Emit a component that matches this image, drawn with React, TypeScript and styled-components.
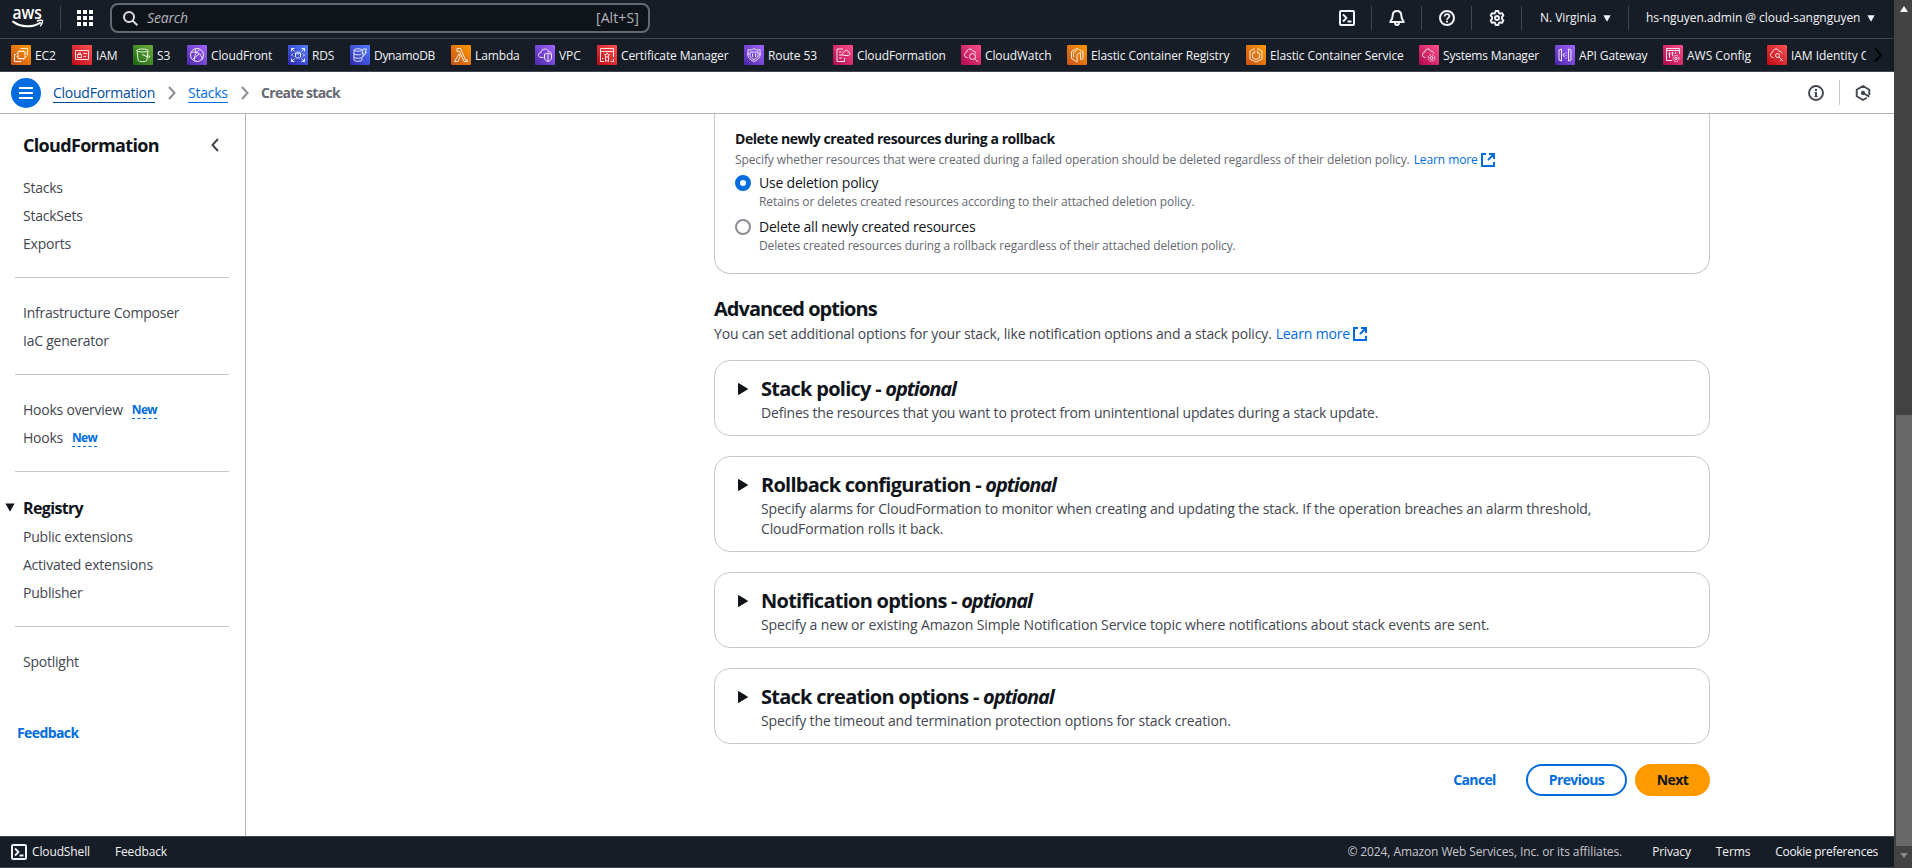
import React from "react";
import styled, { createGlobalStyle, css } from "styled-components";

const GlobalStyle = createGlobalStyle`
  *, *::before, *::after { box-sizing: border-box; }
  body {
    margin: 0;
    background: #fff;
    font-family: "Open Sans", "Noto Sans", sans-serif;
    font-size: 14px;
    line-height: 20px;
    letter-spacing: -0.17px;
    color: #0f141a;
  }
`;

const Viewport = styled.div`
  display: grid;
  grid-template-columns: 1894px 18px;
  height: 868px;
  overflow: hidden;
`;

const Page = styled.div`
  display: flex;
  flex-direction: column;
  height: 868px;
  min-width: 0;
`;

/* ---------- scrollbar ---------- */

const ScrollTrack = styled.div`
  display: flex;
  flex-direction: column;
  align-items: center;
  padding: 6px 0 0 2px;
  background: #424242;
`;

const ScrollThumb = styled.div`
  width: 16px;
  height: 431px;
  margin-top: 403px;
  background: #686868;
`;

const ScrollArrow = styled.div<{ $up?: boolean }>`
  width: 0;
  height: 0;
  border: 4px solid transparent;
  ${(p) =>
    p.$up
      ? css`
          border-width: 0 4px 6px;
          border-bottom-color: #fff;
        `
      : css`
          margin-top: 7px;
          border-width: 5px 4px 0;
          border-top-color: #8b8b8b;
        `}
`;

/* ---------- top navigation ---------- */

const TopBar = styled.header`
  display: flex;
  align-items: center;
  flex: none;
  height: 39px;
  padding: 0 19px 2px 12px;
  background: #161d26;
  border-bottom: 1px solid #424650;
  color: #f3f3f7;
`;

const TopDivider = styled.span<{ $before: number; $after: number }>`
  flex: none;
  width: 1px;
  height: 24px;
  margin: 0 ${(p) => p.$after}px 0 ${(p) => p.$before}px;
  background: #424650;
`;

const SearchBox = styled.div`
  display: flex;
  align-items: center;
  width: 540px;
  height: 30px;
  margin-left: 17px;
  padding: 0 9px 0 11px;
  border: 2px solid #656871;
  border-radius: 8px;
  background: #0f141a;
  color: #b4b4bb;
`;

const SearchHint = styled.span`
  flex: 1;
  margin-left: 9px;
  font-style: italic;
`;

const Shortcut = styled.span`
  letter-spacing: 0.12px;
`;

const TopActions = styled.div`
  display: flex;
  align-items: center;
  margin-left: auto;
`;

const TopMenu = styled.span<{ $width: number; $ls: number }>`
  display: flex;
  align-items: center;
  justify-content: space-between;
  width: ${(p) => p.$width}px;
  font-size: 12px;
  letter-spacing: ${(p) => p.$ls}px;
  white-space: nowrap;
`;

const FavoritesBar = styled.nav`
  display: flex;
  align-items: center;
  flex: none;
  height: 33px;
  padding: 0 8px 0 11px;
  background: #161d26;
  border-bottom: 1px solid #424650;
`;

const FavoritesList = styled.div`
  display: flex;
  align-items: center;
  width: 1855px;
  overflow: hidden;
`;

const Favorite = styled.a<{ $pitch: number; $ls?: number }>`
  display: flex;
  align-items: center;
  flex: none;
  gap: 4px;
  width: ${(p) => p.$pitch}px;
  color: #f3f3f7;
  font-size: 12px;
  letter-spacing: ${(p) => p.$ls ?? -0.12}px;
  white-space: nowrap;
`;

const FavoriteName = styled.span`
  padding-top: 1px;
`;

const tileColors = {
  orange: ["#c8511b", "#ff9900"],
  red: ["#bd0816", "#ff5252"],
  green: ["#1b660f", "#6cae3e"],
  purple: ["#4d27aa", "#a166ff"],
  blue: ["#2e27ad", "#527fff"],
  pink: ["#b0084d", "#ff4f8b"],
};

const Tile = styled.span<{ $tone: keyof typeof tileColors }>`
  display: flex;
  flex: none;
  width: 20px;
  height: 20px;
  border-radius: 1px;
  background: linear-gradient(
    45deg,
    ${(p) => tileColors[p.$tone][0]},
    ${(p) => tileColors[p.$tone][1]}
  );
`;

const MoreArrow = styled.span`
  display: flex;
  margin-left: 6px;
`;

/* ---------- breadcrumb bar ---------- */

const CrumbBar = styled.div`
  display: flex;
  align-items: center;
  flex: none;
  height: 42px;
  padding: 0 23px 0 11px;
  border-bottom: 1px solid #b4b4bb;
`;

const MenuButton = styled.button`
  display: flex;
  align-items: center;
  justify-content: center;
  width: 30px;
  height: 30px;
  margin-right: 12px;
  padding: 0;
  border: 0;
  border-radius: 50%;
  background: #006ce0;
`;

const Crumb = styled.a<{ $visited?: boolean; $width: number }>`
  width: ${(p) => p.$width}px;
  height: 20px;
  line-height: 20px;
  border-bottom: 1px solid currentColor;
  color: ${(p) => (p.$visited ? "#004a9e" : "#006ce0")};
  letter-spacing: -0.25px;
  white-space: nowrap;
`;

const CurrentCrumb = styled.span`
  padding-top: 1px;
  color: #656871;
  font-weight: 700;
  letter-spacing: -0.7px;
`;

const CrumbChevron = styled.svg`
  width: 8px;
  height: 14px;
  margin: 0 12px 0 13px;
`;

const ToolGroup = styled.div`
  display: flex;
  align-items: center;
  margin-left: auto;
`;

const ToolDivider = styled.span`
  width: 1px;
  height: 25px;
  margin: 0 15px;
  background: #c6c6cd;
`;

/* ---------- side navigation ---------- */

const Body = styled.div`
  display: flex;
  flex: 1;
  min-height: 0;
`;

const SideNav = styled.aside`
  flex: none;
  width: 246px;
  padding: 18px 16px 0 15px;
  border-right: 1px solid #b4b4bb;
  color: #424650;
`;

const SideHeader = styled.div`
  display: flex;
  align-items: center;
  justify-content: space-between;
  height: 26px;
  margin-bottom: 15px;
  padding: 0 10px 0 8px;
`;

const SideTitle = styled.h2`
  margin: 0;
  color: #0f141a;
  font-size: 18px;
  font-weight: 700;
  letter-spacing: -0.68px;
`;

const SideLink = styled.a`
  display: flex;
  align-items: center;
  height: 28px;
  padding: 1px 0 0 8px;
  letter-spacing: -0.23px;
`;

const SideRule = styled.hr`
  height: 1px;
  margin: 20px 0;
  border: 0;
  background: #c6c6cd;
`;

const SideSection = styled.div`
  display: flex;
  align-items: center;
  gap: 8px;
  height: 30px;
  margin-left: -10px;
  padding-top: 1px;
  color: #0f141a;
  font-size: 16px;
  font-weight: 700;
  letter-spacing: -0.64px;
`;

const NewBadge = styled.span`
  height: 17px;
  margin: 1px 0 0 9px;
  border-bottom: 1px dashed #006ce0;
  color: #006ce0;
  font-size: 12px;
  font-weight: 700;
  line-height: 16px;
  letter-spacing: -0.7px;
`;

const SideFeedback = styled.a`
  display: block;
  margin: 48px 0 0 2px;
  color: #006ce0;
  font-weight: 700;
  letter-spacing: -0.6px;
`;

/* ---------- content ---------- */

const Main = styled.main`
  flex: 1;
  min-width: 0;
  padding: 0 184px 0 468px;
`;

const OpenPanel = styled.section`
  height: 160px;
  padding: 15px 20px 0;
  border: 1px solid #c6c6cd;
  border-top: 0;
  border-radius: 0 0 16px 16px;
`;

const FieldLabel = styled.div`
  font-weight: 700;
  letter-spacing: -0.46px;
`;

const FieldHint = styled.div`
  display: flex;
  align-items: center;
  height: 22px;
  margin-bottom: 2px;
  color: #656871;
  font-size: 12px;
  letter-spacing: -0.1px;
`;

const Link = styled.a`
  display: inline-flex;
  align-items: center;
  gap: 3px;
  margin-left: 4px;
  color: #006ce0;
`;

const Option = styled.label`
  display: grid;
  grid-template-columns: 16px 1fr;
  column-gap: 8px;
  margin-bottom: 8px;
  align-items: center;
  letter-spacing: -0.2px;
`;

const Radio = styled.span<{ $checked?: boolean }>`
  width: 16px;
  height: 16px;
  border: ${(p) => (p.$checked ? "5px solid #006ce0" : "2px solid #8c8c94")};
  border-radius: 50%;
`;

const OptionHint = styled.span`
  grid-column: 2;
  height: 16px;
  color: #656871;
  font-size: 12px;
  line-height: 18px;
  letter-spacing: -0.12px;
`;

const SectionTitle = styled.h2`
  margin: 23px 0 3px;
  font-size: 20px;
  font-weight: 700;
  line-height: 24px;
  letter-spacing: -0.98px;
`;

const SectionText = styled.div`
  display: flex;
  align-items: center;
  margin-bottom: 16px;
  color: #424650;
  letter-spacing: -0.15px;
`;

const Card = styled.section`
  display: grid;
  grid-template-columns: 12px 1fr;
  column-gap: 12px;
  margin-bottom: 20px;
  padding: 16px 20px 12px 22px;
  border: 1px solid #c6c6cd;
  border-radius: 16px;
`;

const CardTitle = styled.h3`
  margin: 0 0 2px;
  font-size: 20px;
  font-weight: 700;
  line-height: 24px;
  letter-spacing: -0.74px;
`;

const Optional = styled.i`
  letter-spacing: -1.1px;
`;

const CardText = styled.p<{ $ls?: number }>`
  grid-column: 2;
  width: 850px;
  margin: 0;
  color: #424650;
  letter-spacing: ${(p) => p.$ls ?? -0.19}px;
`;

const CardArrow = styled.svg`
  width: 12px;
  height: 14px;
  margin-top: 5px;
`;

const Actions = styled.div`
  display: flex;
  justify-content: flex-end;
  align-items: center;
  gap: 8px;
`;

const Button = styled.button<{ $kind: "link" | "normal" | "primary"; $width: number }>`
  width: ${(p) => p.$width}px;
  height: 32px;
  padding: 0;
  border: 2px solid transparent;
  border-radius: 16px;
  background: transparent;
  color: #006ce0;
  font: 700 14px/20px "Open Sans", "Noto Sans", sans-serif;
  letter-spacing: -0.64px;
  ${(p) => p.$kind === "normal" && css`border-color: #006ce0;`}
  ${(p) =>
    p.$kind === "primary" &&
    css`
      background: #ff9900;
      border-color: #ff9900;
      color: #0f141a;
    `}
`;

/* ---------- footer ---------- */

const Footer = styled.footer`
  display: flex;
  align-items: center;
  flex: none;
  height: 32px;
  padding: 0 16px 0 11px;
  border-top: 1px solid #424650;
  border-bottom: 1px solid #424650;
  background: #161d26;
  color: #f3f3f7;
  font-size: 12px;
`;

const FooterLink = styled.a<{ $gap: number; $ls?: number }>`
  margin-left: ${(p) => p.$gap}px;
  letter-spacing: ${(p) => p.$ls ?? -0.13}px;
`;

const Copyright = styled.span`
  margin-left: auto;
  color: #c6c6cd;
  letter-spacing: -0.1px;
`;

/* ---------- icons ---------- */

const LogoSvg = styled.svg`
  overflow: visible;
`;

const AwsLogo = () => (
  <LogoSvg width="32" height="24" viewBox="0 0 32 24" fill="none">
    <text x="0.5" y="12.6" fill="#fff" fontSize="18" fontWeight="600" fontFamily="Open Sans, sans-serif" textLength="29.5" lengthAdjust="spacingAndGlyphs" letterSpacing="0">aws</text>
    <path d="M1 15.600c8 6 19.500 6 27 1.200" stroke="#fff" strokeWidth="2" strokeLinecap="round" />
    <path d="M25.300 15c2-.9 4.700-1 5.100-.5.4.6-.2 3.600-1.900 5.200" stroke="#fff" strokeWidth="1.400" strokeLinecap="round" />
  </LogoSvg>
);

const AppsIcon = () => (
  <svg width="16" height="16" viewBox="0 0 16 16" fill="#fff">
    {[0, 6, 12].map((y) => [0, 6, 12].map((x) => <rect key={`${x}-${y}`} x={x} y={y} width="4" height="4" />))}
  </svg>
);

const SearchIcon = () => (
  <svg width="15" height="15" viewBox="0 0 15 15" fill="none" stroke="#dedee3" strokeWidth="2">
    <circle cx="6" cy="6" r="5" />
    <path d="M9.600 9.600 14.300 14.300" />
  </svg>
);

const ShellIcon = ({ color = "#f3f3f7" }: { color?: string }) => (
  <svg width="16" height="16" viewBox="0 0 16 16" fill="none" stroke={color} strokeWidth="2" strokeLinejoin="round">
    <rect x="1" y="1" width="14" height="14" rx="1" />
    <path d="M4 4.500 7.500 8 4 11.500M8.500 11.500h4" strokeWidth="1.800" />
  </svg>
);

const BellIcon = () => (
  <svg width="16" height="16" viewBox="0 0 16 16" fill="none" stroke="#f3f3f7" strokeWidth="2" strokeLinejoin="round">
    <path d="M8 1C5.200 1 3.700 3 3.700 5.500c0 3-1 4.500-2.500 6.500h13.600c-1.500-2-2.500-3.500-2.500-6.500C12.300 3 10.800 1 8 1Z" />
    <path d="M6 12.500c0 1.600.8 2.500 2 2.500s2-.9 2-2.500" />
  </svg>
);

const HelpIcon = () => (
  <svg width="16" height="16" viewBox="0 0 16 16" fill="none" stroke="#f3f3f7" strokeWidth="2">
    <circle cx="8" cy="8" r="7" />
    <path d="M5.600 6.500C5.600 5 6.600 4.200 8 4.200s2.400.8 2.400 2.100C10.400 7.800 8 7.900 8 9.800" strokeWidth="1.700" />
    <path d="M8 10.700v1.900" />
  </svg>
);

const GearIcon = () => (
  <svg width="16" height="16" viewBox="0 0 16 16" fill="none" stroke="#f3f3f7" strokeWidth="1.900" strokeLinejoin="round">
    <path d="M6.600 1h2.800l.4 1.900 1.300.8 1.900-.6 1.400 2.400L13 6.900v2.200l1.400 1.400-1.400 2.400-1.900-.6-1.300.8-.4 1.900H6.600l-.4-1.900-1.300-.8-1.900.6-1.400-2.400L3 9.100V6.900L1.600 5.500 3 3.100l1.900.6 1.300-.8Z" />
    <circle cx="8" cy="8" r="2" />
  </svg>
);

const CaretDown = ({ color = "#f3f3f7", width = 8 }: { color?: string; width?: number }) => (
  <svg width={width} height={width - 1} viewBox="0 0 8 7" fill={color}>
    <path d="M.3.300h7.400L4 6.800Z" />
  </svg>
);

const ExternalIcon = () => (
  <svg width="14" height="14" viewBox="0 0 14 14" fill="none" stroke="#006ce0" strokeWidth="2">
    <path d="M5 1H1v12h12V9M8 1h5v5M13 1 7 7" />
  </svg>
);

const InfoIcon = () => (
  <svg width="16" height="16" viewBox="0 0 16 16" fill="none" stroke="#424650" strokeWidth="1.900">
    <circle cx="8" cy="8" r="7" />
    <path d="M8 4v1.900M8 7v5" strokeWidth="2" />
    <path d="M6.500 7.500H8M6.300 11.600h3.400" strokeWidth="1" />
  </svg>
);

const HexIcon = () => (
  <svg width="16" height="16" viewBox="0 0 16 16" fill="none" stroke="#424650" strokeWidth="1.900" strokeLinejoin="round">
    <path d="M14.300 10V4.700L8 1 1.700 4.700v6.600L8 15l3.800-2.200" />
    <circle cx="8" cy="8" r="1.200" fill="#424650" />
    <path d="m8 8 6.300 3.600" />
  </svg>
);

const Separator = () => (
  <CrumbChevron viewBox="0 0 8 14" fill="none" stroke="#8c8c94" strokeWidth="2">
    <path d="m1 1 5.500 6L1 13" />
  </CrumbChevron>
);

const cloud = "M6.500 12.500C4.500 12.500 3.500 11.300 3.500 9.800c0-1.400.9-2.300 2.200-2.600C5.800 5.300 7.200 4 9 4c1.600 0 2.700.9 3.200 2.400 1.600-.3 2.600.7 2.600 2.100";

const glyphs: Record<string, React.ReactNode> = {
  ec2: <path d="M7 6.500h7v7H7zM9 6.500V5M12 6.500V5M9 15v-1.500M12 15v-1.500M14 8.500h1.500M14 11.500h1.500M5.500 8.500H7M5.500 11.500H7M9.500 3.500h7v7M10.500 16.500h-7v-7H5" />,
  iam: <path d="M3.500 5.500h13v9h-13zM5.500 9.500h4v3h-4zM6.500 9.500V8h2v1.500M11.500 8.500H15M11.500 11.500H14" />,
  s3: <path d="M4 5.500c0 2 11 2 11 0s-11-2-11 0l1.200 10c0 1.500 8.600 1.500 8.600 0L15 5.500M9 9.500l6 2.500c2.500 1 2-1-.5-2.200" />,
  cloudfront: <path d="M10 3.500a6.500 6.500 0 1 0 0 13 6.500 6.500 0 0 0 0-13ZM4.500 7.500c3-1 5.500-.5 8 1.500s3 4 2.500 6M8 16c-1.500-4 .5-8 4.500-11.500M6 14l6-5M9 8l-1-4" />,
  rds: <path d="M3.500 6.500v-3h3M3.500 3.500l3 3M13.500 3.500h3v3M16.500 3.500l-3 3M3.500 13.500v3h3M3.500 16.500l3-3M16.500 13.500v3h-3M16.500 16.500l-3-3M7.500 8c0 1.200 5 1.200 5 0s-5-1.200-5 0v4c0 1.300 5 1.300 5 0V8M5 8.500 3.500 10 5 11.500M15 8.500l1.500 1.500-1.500 1.500" />,
  dynamodb: <path d="M4 5c0 1.600 8 1.600 8 0s-8-1.600-8 0v10c0 1.700 8 1.700 8 0v-3M4 8.500c0 1.500 6 1.700 7 .8M4 12c0 1.500 6 1.700 7.500.6M13 4h3.500L15 7.500h1.500L12.500 12l1-3.500H12Z" />,
  lambda: <path d="M6 3.500h3.500l5 11.500h2v1.500h-3.500L8.500 6.500H6zM8 9l1.200 2.500-2.200 5H3.500Z" />,
  vpc: <path d="M8.500 12.500H6c-3.500-.5-3-5 0-5 .2-4 6-5 7.500-1 1.800-.2 2.500.8 2.500 2M9.500 9c1.500 0 2.500-.5 3.500-1 1 .5 2 1 3.500 1v4c0 2-2 3-3.500 3.500-1.500-.5-3.500-1.500-3.500-3.500zM13 8v8.500" />,
  cert: <path d="M16.500 12v-8.500h-13v13H7M3.500 6.500h13M13.500 16.500h3V14M10 7.800l.8 1.600 1.700.3-1.200 1.200.3 1.700-1.600-.8-1.600.8.300-1.700-1.200-1.200 1.700-.3zM8.500 13v3.500l1.500-1 1.500 1V13M5 13.500h1.500" />,
  route53: <path d="M4 4.500c2 1 4 .5 6-1 2 1.500 4 2 6 1v5.500c0 3.500-3.500 5.500-6 6.500-2.500-1-6-3-6-6.500zM6 7h8v3.500c0 2-2.500 3.300-4 4-1.500-.7-4-2-4-4zM8.500 8.500v3.500M11.500 8.500v3.500M3 9h2M15 9h2" />,
  cloudformation: <path d="M10 4H4v12.500h7.500V13M6 7h2.500M6 10h4M6 13h3M11 10.500c-2-.5-2-3.200.3-3.500.4-2.300 3.500-2.200 4 0 2 .3 2 3 .2 3.500Z" />,
  cloudwatch: <><path d={cloud} /><path d="M11.500 8.500a3 3 0 1 0 0 6 3 3 0 0 0 0-6ZM13.800 13.800l3 3" /></>,
  ecr: <path d="M10 17 4.500 13.500v-7L10 3.500l6 3v7l-2 1.200M10 17V9.500l3.500-2v7M6.500 12.500v-5L10 5.500" />,
  ecs: <path d="M8.500 3.500 4 6v8l6 3 6-3V6l-4.500-2.500M8.500 5.500v3M11.500 5.500v3M8.500 7 6.500 8.500v4l3.500 2 3.500-2v-4L11.500 7" />,
  ssm: <><path d={cloud} /><circle cx="12.500" cy="13" r="1.400" /><circle cx="12.500" cy="13" r="3.300" strokeDasharray="1.600 1" /></>,
  api: <path d="M6.500 4 4 5v10l2.500 1zM13.500 4 16 5v10l-2.500 1zM9.500 8 8 10l1.500 2M11 7.500v1M11 10v1M11 12.500v1" />,
  config: <><path d="M9 15.500H3.500v-12h13V9M3.500 5.500h13M6.500 7v6M9.500 7v4M12.500 7v2M5.500 9h2M8.500 8h2" /><circle cx="13" cy="13.500" r="1.200" /><circle cx="13" cy="13.500" r="3" strokeDasharray="1.500 .9" /></>,
  identity: <><path d={cloud} /><circle cx="10.500" cy="10.500" r="2" /><path d="m12 12 4 4M14.500 14.500l-1.200 1.200" /></>,
};

const ServiceIcon = ({ tone, glyph }: { tone: keyof typeof tileColors; glyph: string }) => (
  <Tile $tone={tone}>
    <svg width="20" height="20" viewBox="0 0 20 20" fill="none" stroke="#fff" strokeWidth="0.950" opacity="0.920">
      {glyphs[glyph]}
    </svg>
  </Tile>
);

const favorites: { name: string; tone: keyof typeof tileColors; glyph: string; pitch: number; ls?: number }[] = [
  { name: "EC2", tone: "orange", glyph: "ec2", pitch: 61 },
  { name: "IAM", tone: "red", glyph: "iam", pitch: 61 },
  { name: "S3", tone: "green", glyph: "s3", pitch: 54 },
  { name: "CloudFront", tone: "purple", glyph: "cloudfront", pitch: 101 },
  { name: "RDS", tone: "blue", glyph: "rds", pitch: 62 },
  { name: "DynamoDB", tone: "blue", glyph: "dynamodb", pitch: 101, ls: -0.32 },
  { name: "Lambda", tone: "orange", glyph: "lambda", pitch: 84 },
  { name: "VPC", tone: "purple", glyph: "vpc", pitch: 62 },
  { name: "Certificate Manager", tone: "red", glyph: "cert", pitch: 147 },
  { name: "Route 53", tone: "purple", glyph: "route53", pitch: 89 },
  { name: "CloudFormation", tone: "pink", glyph: "cloudformation", pitch: 128 },
  { name: "CloudWatch", tone: "pink", glyph: "cloudwatch", pitch: 106 },
  { name: "Elastic Container Registry", tone: "orange", glyph: "ecr", pitch: 179, ls: -0.1 },
  { name: "Elastic Container Service", tone: "orange", glyph: "ecs", pitch: 173, ls: -0.1 },
  { name: "Systems Manager", tone: "pink", glyph: "ssm", pitch: 136, ls: -0.2 },
  { name: "API Gateway", tone: "purple", glyph: "api", pitch: 108 },
  { name: "AWS Config", tone: "pink", glyph: "config", pitch: 104, ls: 0 },
  { name: "IAM Identity Center", tone: "red", glyph: "identity", pitch: 150, ls: -0.05 },
];

const cards = [
  { title: "Stack policy", text: "Defines the resources that you want to protect from unintentional updates during a stack update.", ls: -0.19 },
  { title: "Rollback configuration", text: "Specify alarms for CloudFormation to monitor when creating and updating the stack. If the operation breaches an alarm threshold, CloudFormation rolls it back.", ls: -0.165 },
  { title: "Notification options", text: "Specify a new or existing Amazon Simple Notification Service topic where notifications about stack events are sent.", ls: -0.14 },
  { title: "Stack creation options", text: "Specify the timeout and termination protection options for stack creation.", ls: -0.14 },
];

export default function App() {
  return (
    <Viewport>
      <GlobalStyle />
      <Page>
        <TopBar>
          <AwsLogo />
          <TopDivider $before={16} $after={16} />
          <AppsIcon />
          <SearchBox>
            <SearchIcon />
            <SearchHint>Search</SearchHint>
            <Shortcut>[Alt+S]</Shortcut>
          </SearchBox>
          <TopActions>
            <ShellIcon />
            <TopDivider $before={16} $after={17} />
            <BellIcon />
            <TopDivider $before={16} $after={17} />
            <HelpIcon />
            <TopDivider $before={16} $after={17} />
            <GearIcon />
            <TopDivider $before={16} $after={18} />
            <TopMenu $width={71} $ls={-0.05}>
              N. Virginia
              <CaretDown />
            </TopMenu>
            <TopDivider $before={17} $after={17} />
            <TopMenu $width={229} $ls={-0.05}>
              hs-nguyen.admin @ cloud-sangnguyen
              <CaretDown />
            </TopMenu>
          </TopActions>
        </TopBar>

        <FavoritesBar>
          <FavoritesList>
            {favorites.map((f) => (
              <Favorite key={f.name} $pitch={f.pitch} $ls={f.ls}>
                <ServiceIcon tone={f.tone} glyph={f.glyph} />
                <FavoriteName>{f.name}</FavoriteName>
              </Favorite>
            ))}
          </FavoritesList>
          <MoreArrow>
            <svg width="12" height="16" viewBox="0 0 12 16" fill="none" stroke="#000" strokeWidth="2">
              <path d="m3 1.500 6 6.500-6 6.500" />
            </svg>
          </MoreArrow>
        </FavoritesBar>

        <CrumbBar>
          <MenuButton aria-label="Menu">
            <svg width="14" height="14" viewBox="0 0 14 14" stroke="#fff" strokeWidth="2">
              <path d="M0 2h14M0 7h14M0 12h14" />
            </svg>
          </MenuButton>
          <Crumb $visited $width={102}>CloudFormation</Crumb>
          <Separator />
          <Crumb $width={40}>Stacks</Crumb>
          <Separator />
          <CurrentCrumb>Create stack</CurrentCrumb>
          <ToolGroup>
            <InfoIcon />
            <ToolDivider />
            <HexIcon />
          </ToolGroup>
        </CrumbBar>

        <Body>
          <SideNav>
            <SideHeader>
              <SideTitle>CloudFormation</SideTitle>
              <svg width="8" height="14" viewBox="0 0 8 14" fill="none" stroke="#424650" strokeWidth="2">
                <path d="M7 1 1.500 7 7 13" />
              </svg>
            </SideHeader>
            <SideLink>Stacks</SideLink>
            <SideLink>StackSets</SideLink>
            <SideLink>Exports</SideLink>
            <SideRule />
            <SideLink>Infrastructure Composer</SideLink>
            <SideLink>IaC generator</SideLink>
            <SideRule />
            <SideLink>Hooks overview<NewBadge>New</NewBadge></SideLink>
            <SideLink>Hooks<NewBadge>New</NewBadge></SideLink>
            <SideRule />
            <SideSection>
              <CaretDown color="#0f141a" width={10} />
              Registry
            </SideSection>
            <SideLink>Public extensions</SideLink>
            <SideLink>Activated extensions</SideLink>
            <SideLink>Publisher</SideLink>
            <SideRule />
            <SideLink>Spotlight</SideLink>
            <SideFeedback>Feedback</SideFeedback>
          </SideNav>

          <Main>
            <OpenPanel>
              <FieldLabel>Delete newly created resources during a rollback</FieldLabel>
              <FieldHint>
                Specify whether resources that were created during a failed operation should be deleted regardless of their deletion policy.
                <Link>Learn more<ExternalIcon /></Link>
              </FieldHint>
              <Option>
                <Radio $checked />
                Use deletion policy
                <OptionHint>Retains or deletes created resources according to their attached deletion policy.</OptionHint>
              </Option>
              <Option>
                <Radio />
                Delete all newly created resources
                <OptionHint>Deletes created resources during a rollback regardless of their attached deletion policy.</OptionHint>
              </Option>
            </OpenPanel>

            <SectionTitle>Advanced options</SectionTitle>
            <SectionText>
              You can set additional options for your stack, like notification options and a stack policy.
              <Link>Learn more<ExternalIcon /></Link>
            </SectionText>

            {cards.map((c) => (
              <Card key={c.title}>
                <CardArrow viewBox="0 0 12 14">
                  <path d="M1.500 1.500 10.500 7l-9 5.500Z" fill="#0f141a" stroke="#0f141a" strokeLinejoin="round" />
                </CardArrow>
                <CardTitle>{c.title} - <Optional>optional</Optional></CardTitle>
                <CardText $ls={c.ls}>{c.text}</CardText>
              </Card>
            ))}

            <Actions>
              <Button $kind="link" $width={87}>Cancel</Button>
              <Button $kind="normal" $width={101}>Previous</Button>
              <Button $kind="primary" $width={75}>Next</Button>
            </Actions>
          </Main>
        </Body>

        <Footer>
          <ShellIcon />
          <FooterLink $gap={5}>CloudShell</FooterLink>
          <FooterLink $gap={25}>Feedback</FooterLink>
          <Copyright>© 2024, Amazon Web Services, Inc. or its affiliates.</Copyright>
          <FooterLink $gap={30}>Privacy</FooterLink>
          <FooterLink $gap={25}>Terms</FooterLink>
          <FooterLink $gap={25} $ls={-0.3}>Cookie preferences</FooterLink>
        </Footer>
      </Page>

      <ScrollTrack>
        <ScrollArrow $up />
        <ScrollThumb />
        <ScrollArrow />
      </ScrollTrack>
    </Viewport>
  );
}
